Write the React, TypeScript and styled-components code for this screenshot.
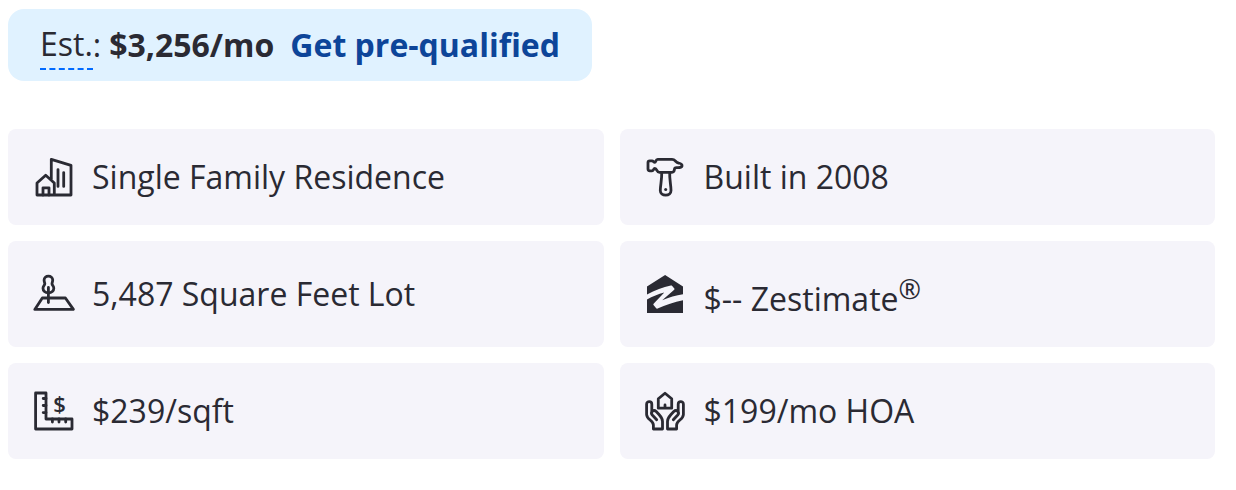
import React from "react";
import styled, { createGlobalStyle } from "styled-components";

const GlobalStyle = createGlobalStyle`
  * {
    box-sizing: border-box;
  }
  body {
    margin: 0;
    background: #ffffff;
    color: #2a2a33;
    font-family: "Open Sans", "Noto Sans", sans-serif;
    font-size: 32px;
    line-height: 48px;
  }
`;

const Page = styled.main`
  padding: 9px 21px 31px 8px;
`;

const PaymentBar = styled.section`
  display: flex;
  align-items: center;
  width: fit-content;
  min-height: 72px;
  padding: 0 32px;
  border-radius: 16px;
  background: #e0f2ff;
`;

const EstimateButton = styled.button`
  padding: 0;
  border: 0;
  border-bottom: 2px dashed #006aff;
  background: none;
  color: inherit;
  font: inherit;
  cursor: pointer;
`;

const Amount = styled.strong`
  margin: 0 16px 0 8px;
  font-weight: 700;
`;

const PrequalifyLink = styled.a`
  color: #0d4599;
  font-weight: 700;
  text-decoration: none;
`;

const FactGrid = styled.ul`
  display: grid;
  grid-template-columns: 1fr 1fr;
  gap: 16px;
  margin: 48px 0 0;
  padding: 0;
  list-style: none;
`;

const Fact = styled.li`
  display: flex;
  align-items: center;
  gap: 16px;
  padding: 24px;
  border-radius: 8px;
  background: #f5f4fa;
`;

const Icon = styled.svg.attrs({ viewBox: "0 0 44 44", "aria-hidden": true })`
  flex: none;
  width: 44px;
  height: 44px;
  fill: none;
  stroke: currentColor;
  stroke-width: 2.8;
  stroke-linecap: round;
  stroke-linejoin: round;
`;

const IconText = styled.text`
  fill: currentColor;
  stroke: none;
  font-size: 22px;
  font-weight: 600;
  text-anchor: middle;
`;

const Registered = styled.sup`
  font-size: 27px;
`;

const HomeIcon = () => (
  <Icon>
    <path d="M19.3 24V4.3L39 10.3V40H5V28L13.7 20.3L22.3 28V40" />
    <path d="M11 40V32.8H17V40M26 14.6V31.4M31.7 17.6V31.4" />
  </Icon>
);

const HammerIcon = () => (
  <Icon>
    <path d="M13.7 4.3H28C31.5 4.3 31.5 7.5 34.5 8C37 8.5 38.3 9.5 38 11C37.5 12.6 36 12.8 32.5 12.6C30.8 12.6 30.5 13 30.4 14.5C30.3 16.3 29.7 17.3 28 17.3H15.5C12.5 17.3 13.3 13.5 10.8 13.5C9.3 13.5 9.7 15.8 8 15.8H5.8C4.5 15.8 4 15 4 14V7.5C4 6.3 4.5 5.8 5.8 5.8H8C9.5 5.8 9.7 7.4 10.8 7.4C12 7.4 11.5 4.3 13.7 4.3Z" />
    <path d="M17.7 17.3C18 25 16.3 30 16.3 35.5C16.3 38.3 18.6 40.2 21.7 40.2S27 38.3 27 35.5C27 30 25.4 25 25.7 17.3" />
    <circle cx="21.7" cy="34.5" r="1.5" fill="currentColor" stroke="none" />
  </Icon>
);

const LotIcon = () => (
  <Icon>
    <path d="M10.3 26H33.4L41.4 37.4H2.8Z" />
    <path d="M16.4 30.6V15.5" />
    <path d="M16.4 20.8C13 20.8 11 18.8 11 16.3C11 14.2 12.8 13.2 12.8 11.8C12.8 10.6 12.1 9.8 12.1 8C12.1 5.7 14 4.1 16.4 4.1S20.7 5.7 20.7 8C20.7 9.8 20 10.6 20 11.8C20 13.2 21.8 14.2 21.8 16.3C21.8 18.8 19.8 20.8 16.4 20.8Z" />
  </Icon>
);

const ZestimateIcon = () => (
  <Icon>
    <path
      fill="currentColor"
      stroke="none"
      d="M21.1 3L39 14.5V22.2C32 23.2 25 25.4 18.2 28.2L30.2 17.8C30.7 17.3 30.6 17 30.3 16.6L28.2 14C27.8 13.5 27.5 13.4 26.8 13.5C19 15 11 18 3 22.5V14.5Z"
    />
    <path
      fill="currentColor"
      stroke="none"
      d="M3 27.5C8.5 24.4 14.2 22.3 20.3 20.6L9.6 31.8C9.2 32.2 9.2 32.6 9.5 33L12.2 36.3C12.6 36.8 13 36.9 13.6 36.6C21.5 32.8 30.4 30 39 28.2V41H3Z"
    />
  </Icon>
);

const RulerIcon = () => (
  <Icon>
    <path d="M3.6 4H14V30H40V40H3.6Z" />
    <path d="M11.2 9.5H14M11.2 16.5H14M11.2 23.6H14M20.4 30V33M27 30V33M33.7 30V33" />
    <IconText x="27.6" y="23">$</IconText>
  </Icon>
);

const handPath =
  "M7.8 23.5V15.2C7.8 11.8 2.6 11.8 2.6 15.2V25.5C2.6 30.5 9.4 31.5 9.4 36V40H18.5V32.5C18.5 29.5 16.8 27.5 15 25.5L12.2 22.5C9.5 20 6 23.3 8.3 26L12.7 30.8";

const HandsIcon = () => (
  <Icon>
    <path d="M21 4.2L14.3 9.8V19.2H27.7V9.8ZM21 16V19" />
    <path d={handPath} />
    <path d={handPath} transform="matrix(-1 0 0 1 42 0)" />
  </Icon>
);

const facts: { icon: React.ReactNode; label: React.ReactNode }[] = [
  { icon: <HomeIcon />, label: "Single Family Residence" },
  { icon: <HammerIcon />, label: "Built in 2008" },
  { icon: <LotIcon />, label: "5,487 Square Feet Lot" },
  { icon: <ZestimateIcon />, label: <>$-- Zestimate<Registered>®</Registered></> },
  { icon: <RulerIcon />, label: "$239/sqft" },
  { icon: <HandsIcon />, label: "$199/mo HOA" },
];

export default function App() {
  return (
    <Page>
      <GlobalStyle />
      <PaymentBar>
        <EstimateButton type="button">Est.</EstimateButton>
        <span>:</span>
        <Amount>$3,256/mo</Amount>
        <PrequalifyLink href="#prequalify">Get pre-qualified</PrequalifyLink>
      </PaymentBar>
      <FactGrid>
        {facts.map((fact, index) => (
          <Fact key={index}>
            {fact.icon}
            <span>{fact.label}</span>
          </Fact>
        ))}
      </FactGrid>
    </Page>
  );
}
